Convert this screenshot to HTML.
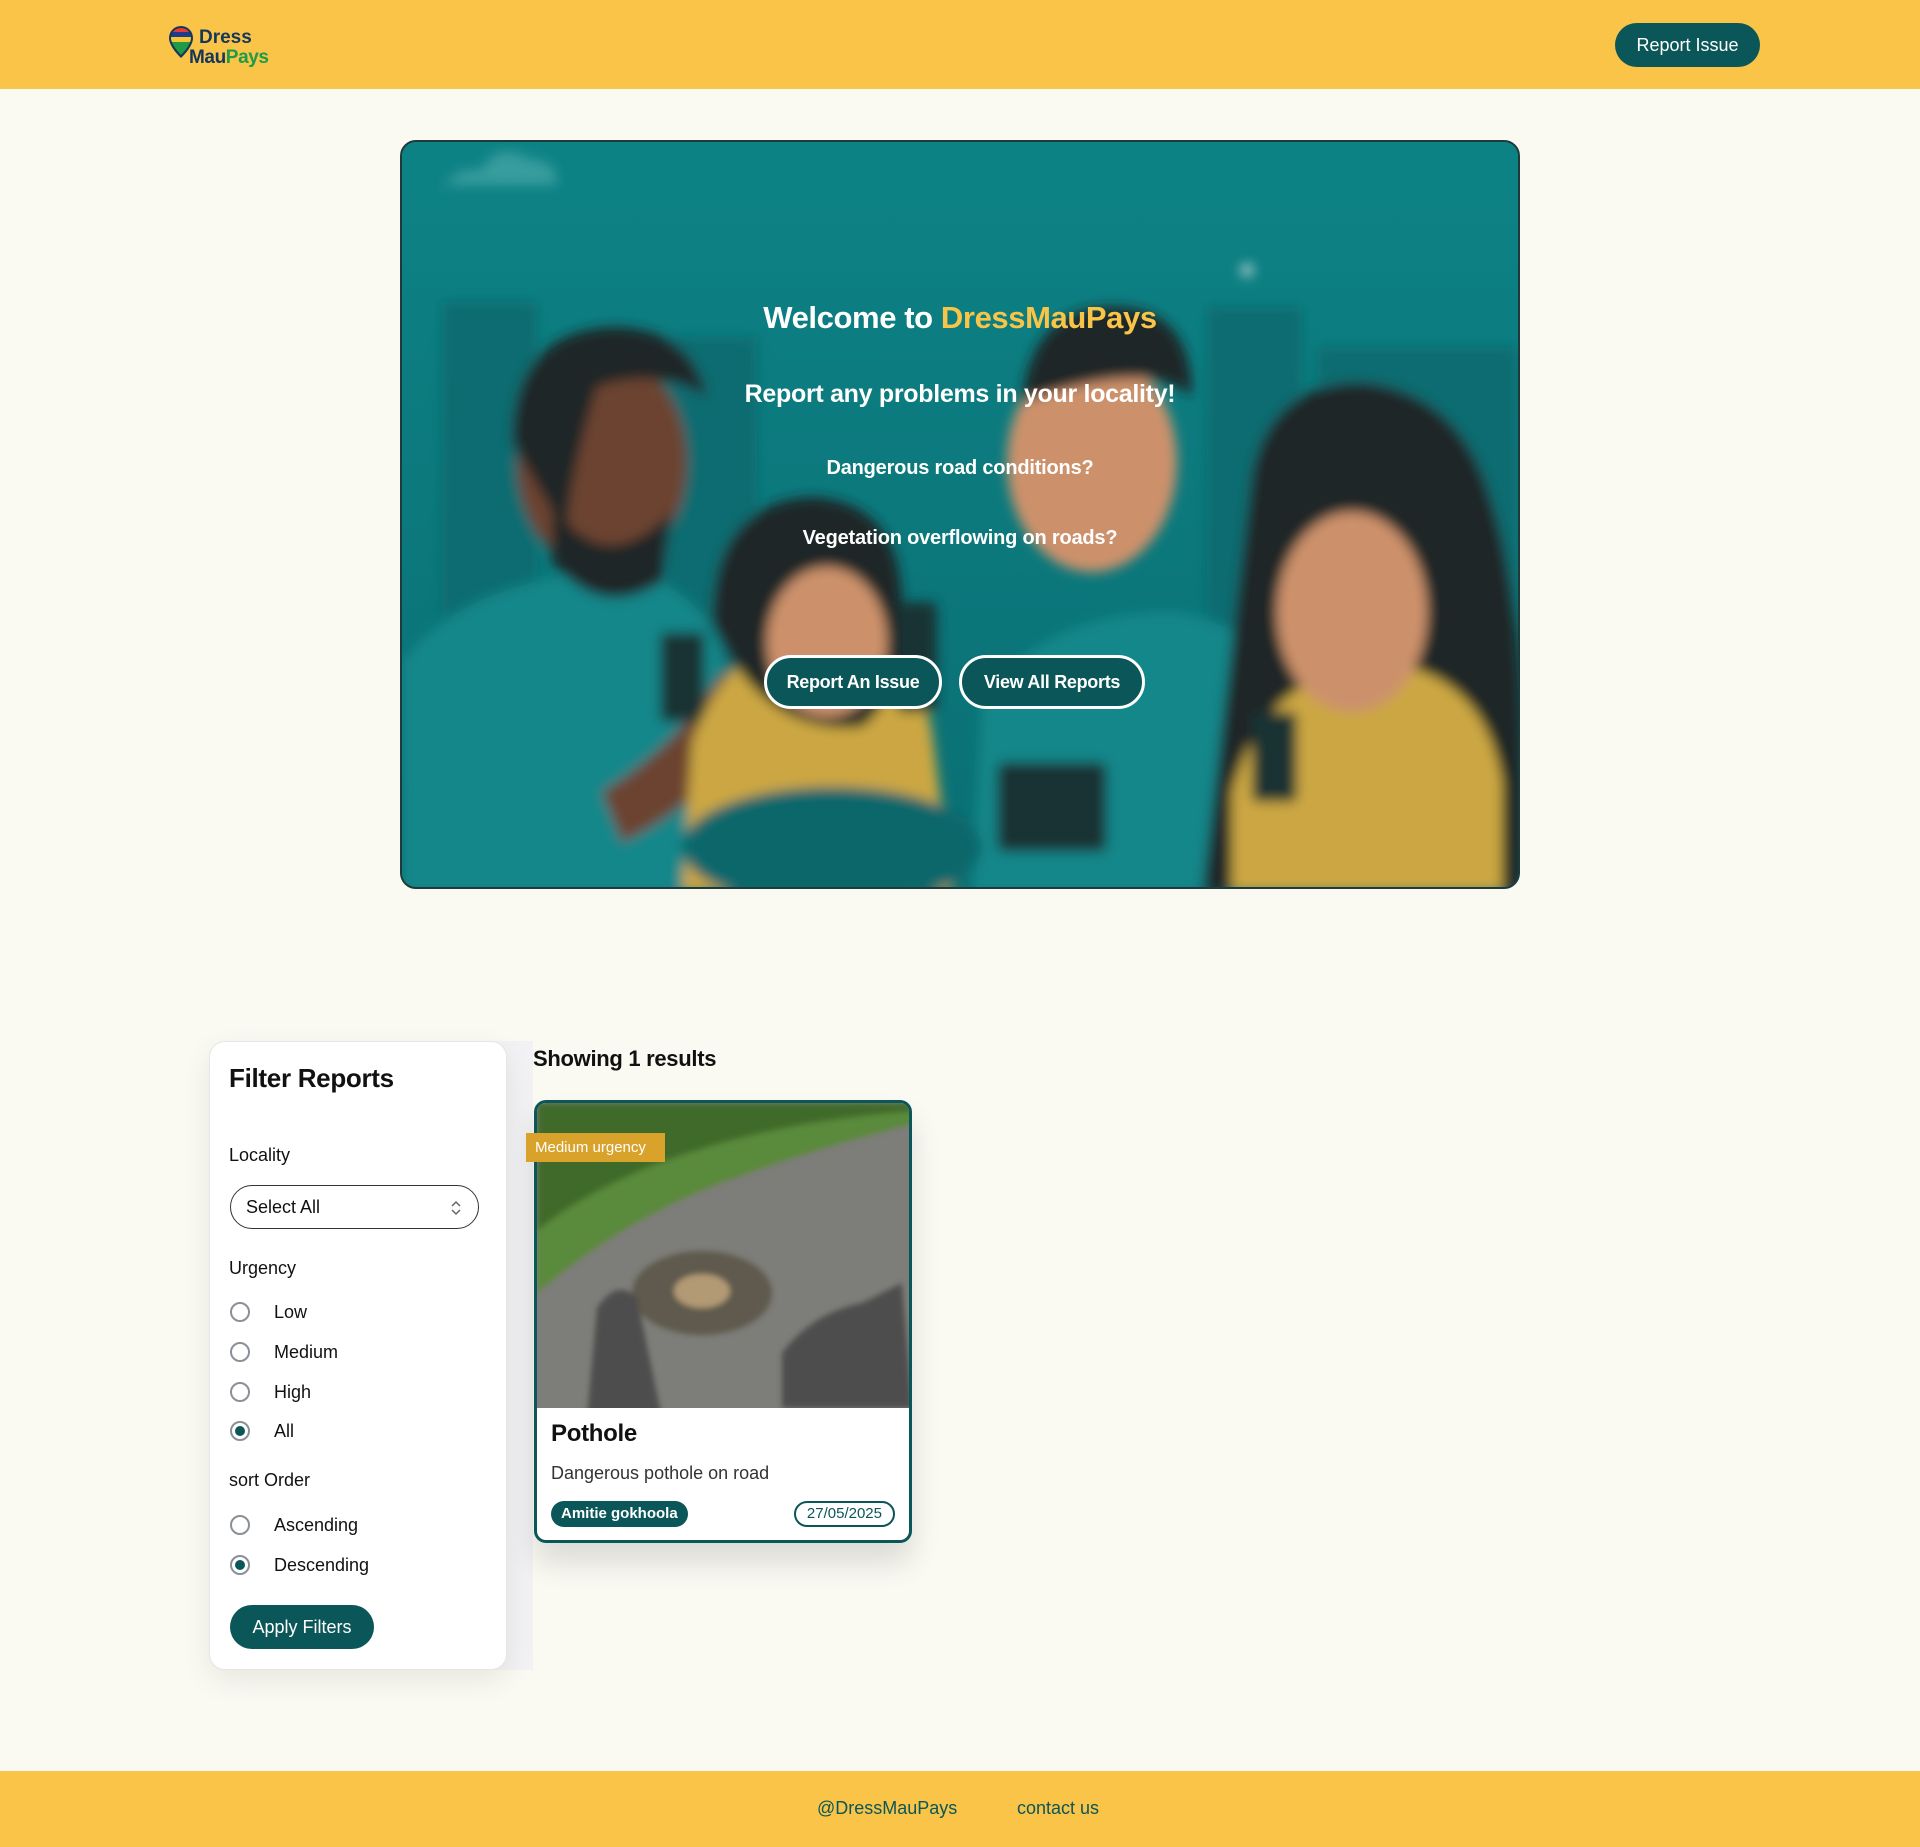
<!DOCTYPE html>
<html><head><meta charset="utf-8"><style>
*{box-sizing:border-box;margin:0;padding:0}
body{width:1920px;height:1847px;background:#fafaf3;font-family:"Liberation Sans",sans-serif;position:relative;overflow:hidden;color:#111}
.hdr{position:absolute;left:0;top:0;width:1920px;height:89px;background:#f9c447}
.logo{position:absolute;left:168px;top:24px}
.btn{position:absolute;background:#0b5658;color:#fff;border-radius:24px;font-weight:500;display:flex;align-items:center;justify-content:center}
.hero{position:absolute;left:400px;top:140px;width:1120px;height:749px;border:2px solid #1f3a3a;border-radius:16px;overflow:hidden;background:#0c7f82}
.hero svg{position:absolute;left:0;top:0}
.ht{position:absolute;left:0;width:100%;text-align:center;color:#fff;font-weight:bold}
.hb{position:absolute;top:513px;height:54px;background:#0b5658;color:#fff;border:3px solid #fff;border-radius:28px;font-weight:bold;font-size:18px;display:flex;align-items:center;justify-content:center;letter-spacing:-0.3px}
.panel{position:absolute;left:209px;top:1041px;width:298px;height:629px;background:#fff;border:1px solid #e6e6e6;border-radius:16px;box-shadow:0 10px 30px rgba(0,0,0,.08)}
.strip{position:absolute;left:480px;top:1041px;width:53px;height:629px;background:#f2f2f4}
.lbl{position:absolute;left:229px;font-size:18px;color:#111}
.rad{position:absolute;left:230px;width:20px;height:20px;border:2px solid #8a8f98;border-radius:50%}
.rad.on::after{content:"";position:absolute;left:3px;top:3px;width:10px;height:10px;border-radius:50%;background:#0b5658}
.rl{position:absolute;left:274px;font-size:18px;color:#111}
.card{position:absolute;left:534px;top:1100px;width:378px;height:443px;border:3px solid #0b5658;border-radius:12px;background:#fff;overflow:hidden;box-shadow:0 20px 30px rgba(0,0,0,.12)}
.ftr{position:absolute;left:0;top:1771px;width:1920px;height:76px;background:#f9c447}
.ftr span{position:absolute;top:27px;font-size:18px;color:#0b5658}
</style></head><body>
<div class="hdr">
 <div class="logo">
  <svg width="110" height="44" viewBox="0 0 110 44">
   <path d="M13 2a12 12 0 0 1 12 12c0 9-12 20-12 20S1 23 1 14A12 12 0 0 1 13 2z" fill="#14375a"/>
   <clipPath id="c"><path d="M13 4a10 10 0 0 1 10 10c0 7-10 17-10 17S3 21 3 14A10 10 0 0 1 13 4z"/></clipPath>
   <g clip-path="url(#c)"><rect x="0" y="3" width="26" height="5" fill="#e63a35"/><rect x="0" y="8" width="26" height="5" fill="#1f3c8c"/><rect x="0" y="13" width="26" height="5" fill="#f7c631"/><rect x="0" y="18" width="26" height="14" fill="#1f9a47"/></g>
   <text x="31" y="19" font-family="Liberation Sans" font-weight="bold" font-size="19" fill="#14375a">Dress</text>
   <text x="21" y="39" font-family="Liberation Sans" font-weight="bold" font-size="19" fill="#14375a" textLength="80">Mau<tspan fill="#1f9a47">Pays</tspan></text>
  </svg>
 </div>
 <div class="btn" style="left:1615px;top:23px;width:145px;height:44px;font-size:18px">Report Issue</div>
</div>

<div class="hero">
 <svg width="1120" height="749" viewBox="0 0 1120 749">
  <defs><filter id="b"><feGaussianBlur stdDeviation="6"/></filter>
  <linearGradient id="g" x1="0" y1="0" x2="0" y2="1"><stop offset="0" stop-color="#0e8587"/><stop offset="1" stop-color="#0b6f73"/></linearGradient></defs>
  <rect width="1120" height="749" fill="url(#g)"/>
  <g filter="url(#b)">
   <path d="M40 50 q10-25 40-22 q15-30 50-10 q25 0 25 25 h-115z" fill="#3fa3a3"/>
   <rect x="40" y="160" width="95" height="420" fill="#0a6c70"/>
   <rect x="265" y="195" width="90" height="380" fill="#0a6c70"/>
   <rect x="805" y="165" width="95" height="420" fill="#0a6c70"/>
   <rect x="915" y="205" width="200" height="390" fill="#0a6c70"/>
   <path d="M0 520 q60-80 200-90 q90 0 120 80 l20 240 h-340z" fill="#168a8c"/>
   <ellipse cx="200" cy="320" rx="85" ry="110" fill="#7a3c26"/>
   <path d="M110 300 q0-110 100-115 q80 0 95 70 q-50-30-110-10 q-30 100-30 150z" fill="#231c1d"/>
   <path d="M150 360 q50 80 120 10 l-10 70 q-60 40-110 -20z" fill="#231c1d"/>
   <path d="M200 650 q80-50 120-120 l30 40 q-40 90-130 130z" fill="#7a3c26"/>
   <rect x="258" y="490" width="45" height="90" rx="6" fill="#1d2a2c"/>
   <path d="M290 600 q40-110 130-110 q90 0 110 100 l20 160 h-270z" fill="#e7ae3a"/>
   <path d="M310 480 q0-120 100-125 q90 5 90 110 q0 90-40 120 q-100 10-150-105z" fill="#231c1d"/>
   <ellipse cx="425" cy="500" rx="60" ry="75" fill="#e89569"/>
   <rect x="495" y="460" width="40" height="110" rx="6" fill="#1d2a2c"/>
   <path d="M580 560 q60-90 190-90 q90 10 110 90 l30 190 h-340z" fill="#168a8c"/>
   <ellipse cx="690" cy="320" rx="85" ry="110" fill="#e89569"/>
   <path d="M620 260 q10-100 100-95 q70 5 70 90 q-40-40-170 5z" fill="#231c1d"/>
   <rect x="595" y="620" width="110" height="90" rx="8" fill="#1d2a2c"/>
   <ellipse cx="430" cy="705" rx="150" ry="60" fill="#0a6669"/>
   <path d="M850 330 q20-90 110-90 q100 10 130 120 q40 120 30 390 h-320z" fill="#231c1d"/>
   <path d="M830 650 q30-110 130-130 q120 0 140 120 l0 110 h-270z" fill="#e7ae3a"/>
   <ellipse cx="950" cy="470" rx="75" ry="100" fill="#e89569"/>
   <rect x="850" y="570" width="45" height="90" rx="6" fill="#1d2a2c"/>
   <circle cx="845" cy="128" r="6" fill="#dfe9e9"/>
  </g>
  <rect width="1120" height="749" fill="#0a7478" opacity="0.12"/>
 </svg>
 <div class="ht" style="top:158px;font-size:31px;letter-spacing:-0.4px">Welcome to <span style="color:#f9c447">DressMauPays</span></div>
 <div class="ht" style="top:238px;font-size:25px;letter-spacing:-0.3px">Report any problems in your locality!</div>
 <div class="ht" style="top:315px;font-size:20px;letter-spacing:-0.2px">Dangerous road conditions?</div>
 <div class="ht" style="top:385px;font-size:20px;letter-spacing:-0.2px">Vegetation overflowing on roads?</div>
 <div class="hb" style="left:362px;width:178px">Report An Issue</div>
 <div class="hb" style="left:557px;width:186px">View All Reports</div>
</div>

<div class="strip"></div>
<div class="panel"></div>
<div class="lbl" style="top:1063px;font-size:26px;font-weight:bold;letter-spacing:-0.3px">Filter Reports</div>
<div class="lbl" style="top:1145px">Locality</div>
<div style="position:absolute;left:230px;top:1185px;width:249px;height:44px;border:1.5px solid #333;border-radius:22px;font-size:18px;padding:11px 0 0 15px">Select All
 <svg style="position:absolute;right:16px;top:13px" width="12" height="18" viewBox="0 0 12 18"><path d="M2 7l4-4 4 4M2 11l4 4 4-4" fill="none" stroke="#666" stroke-width="1.5"/></svg></div>
<div class="lbl" style="top:1258px">Urgency</div>
<div class="rad" style="top:1302px"></div><div class="rl" style="top:1302px">Low</div>
<div class="rad" style="top:1342px"></div><div class="rl" style="top:1342px">Medium</div>
<div class="rad" style="top:1382px"></div><div class="rl" style="top:1382px">High</div>
<div class="rad on" style="top:1421px"></div><div class="rl" style="top:1421px">All</div>
<div class="lbl" style="top:1470px">sort Order</div>
<div class="rad" style="top:1515px"></div><div class="rl" style="top:1515px">Ascending</div>
<div class="rad on" style="top:1555px"></div><div class="rl" style="top:1555px">Descending</div>
<div class="btn" style="left:230px;top:1605px;width:144px;height:44px;font-size:18px">Apply Filters</div>

<div style="position:absolute;left:533px;top:1046px;font-size:22px;font-weight:bold;letter-spacing:-0.3px">Showing 1 results</div>
<div class="card">
 <svg width="378" height="305" viewBox="0 0 378 305" style="display:block">
  <defs><filter id="b2"><feGaussianBlur stdDeviation="3"/></filter></defs>
  <rect width="378" height="305" fill="#7d7d79"/>
  <g filter="url(#b2)">
   <path d="M0 0h378v20q-120 30-220 70q-90 40-158 100z" fill="#5a8a3a"/>
   <path d="M0 0h378v8q-140 10-250 50q-80 30-128 70z" fill="#3f6a2c"/>
   <ellipse cx="165" cy="190" rx="70" ry="42" fill="#5e5a4e"/>
   <ellipse cx="165" cy="188" rx="28" ry="17" fill="#b29a74"/>
   <path d="M60 205q20-30 40-10l25 120h-75z" fill="#4e4e4d"/>
   <path d="M245 250q30-40 80-50l40-20l10 125h-130z" fill="#4e4e4d"/>
  </g>
 </svg>
 <div style="position:absolute;left:14px;top:317px;font-size:24px;font-weight:bold;letter-spacing:-0.3px">Pothole</div>
 <div style="position:absolute;left:14px;top:360px;font-size:18px;color:#333">Dangerous pothole on road</div>
 <div style="position:absolute;left:14px;top:398px;height:26px;padding:0 10px;background:#0b5658;color:#fff;border-radius:14px;font-size:15px;font-weight:bold;line-height:26px">Amitie gokhoola</div>
 <div style="position:absolute;right:14px;top:398px;height:26px;padding:0 11px;border:2px solid #0b5658;color:#0b5658;border-radius:14px;font-size:15px;line-height:22px">27/05/2025</div>
</div>
<div style="position:absolute;left:526px;top:1133px;width:139px;height:29px;background:#d9a22a;color:#fff;font-size:15px;line-height:29px;padding-left:9px">Medium urgency</div>

<div class="ftr"><span style="left:817px">@DressMauPays</span><span style="left:1017px">contact us</span></div>
</body></html>
